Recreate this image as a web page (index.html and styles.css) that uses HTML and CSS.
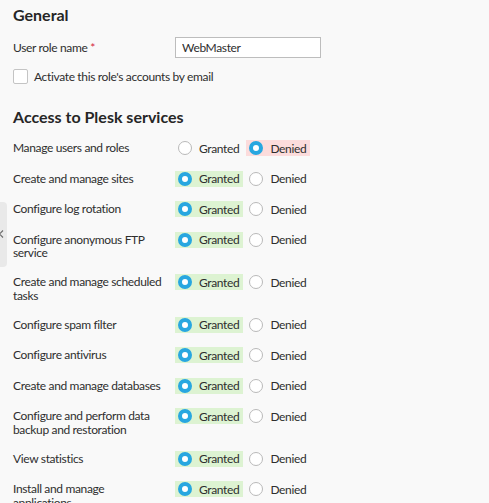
FILE: index.html
```html
<!DOCTYPE html>
<html lang="en">
<head>
    <meta charset="UTF-8">
    <meta name="viewport" content="width=device-width, initial-scale=1.0">
    <title>User role</title>
    <link rel="stylesheet" href="styles.css">
</head>
<body>
    <!-- collapsed sidebar handle -->
    <div class="side-handle">
        <svg class="side-arrow" width="6" height="8" viewBox="0 0 6 8"><path d="M5 0.5 L1.5 4 L5 7.5" fill="none" stroke="#6b6b6b" stroke-width="1.2"/></svg>
    </div>

    <div class="page">
        <!-- General -->
        <section class="form-section">
            <h2 class="section-title">General</h2>
            <div class="form-row">
                <label class="field-label" for="roleName">User role name <span class="required">*</span></label>
                <input class="text-input" id="roleName" type="text" value="WebMaster">
            </div>
            <label class="checkbox-row">
                <span class="checkbox"></span>
                <span>Activate this role's accounts by email</span>
            </label>
        </section>

        <!-- Access to Plesk services -->
        <section class="form-section access">
            <h2 class="section-title">Access to Plesk services</h2>
            <div class="perm-list">
                <div class="perm-row">
                    <div class="perm-label">Manage users and roles</div>
                    <div class="perm-choice">
                        <span class="option"><span class="radio"></span>Granted</span>
                        <span class="option denied"><span class="radio checked"></span>Denied</span>
                    </div>
                </div>
                <div class="perm-row">
                    <div class="perm-label">Create and manage sites</div>
                    <div class="perm-choice">
                        <span class="option granted"><span class="radio checked"></span>Granted</span>
                        <span class="option"><span class="radio"></span>Denied</span>
                    </div>
                </div>
                <div class="perm-row">
                    <div class="perm-label">Configure log rotation</div>
                    <div class="perm-choice">
                        <span class="option granted"><span class="radio checked"></span>Granted</span>
                        <span class="option"><span class="radio"></span>Denied</span>
                    </div>
                </div>
                <div class="perm-row">
                    <div class="perm-label">Configure anonymous FTP service</div>
                    <div class="perm-choice">
                        <span class="option granted"><span class="radio checked"></span>Granted</span>
                        <span class="option"><span class="radio"></span>Denied</span>
                    </div>
                </div>
                <div class="perm-row">
                    <div class="perm-label">Create and manage scheduled tasks</div>
                    <div class="perm-choice">
                        <span class="option granted"><span class="radio checked"></span>Granted</span>
                        <span class="option"><span class="radio"></span>Denied</span>
                    </div>
                </div>
                <div class="perm-row">
                    <div class="perm-label">Configure spam filter</div>
                    <div class="perm-choice">
                        <span class="option granted"><span class="radio checked"></span>Granted</span>
                        <span class="option"><span class="radio"></span>Denied</span>
                    </div>
                </div>
                <div class="perm-row">
                    <div class="perm-label">Configure antivirus</div>
                    <div class="perm-choice">
                        <span class="option granted"><span class="radio checked"></span>Granted</span>
                        <span class="option"><span class="radio"></span>Denied</span>
                    </div>
                </div>
                <div class="perm-row">
                    <div class="perm-label">Create and manage databases</div>
                    <div class="perm-choice">
                        <span class="option granted"><span class="radio checked"></span>Granted</span>
                        <span class="option"><span class="radio"></span>Denied</span>
                    </div>
                </div>
                <div class="perm-row">
                    <div class="perm-label">Configure and perform data backup and restoration</div>
                    <div class="perm-choice">
                        <span class="option granted"><span class="radio checked"></span>Granted</span>
                        <span class="option"><span class="radio"></span>Denied</span>
                    </div>
                </div>
                <div class="perm-row">
                    <div class="perm-label">View statistics</div>
                    <div class="perm-choice">
                        <span class="option granted"><span class="radio checked"></span>Granted</span>
                        <span class="option"><span class="radio"></span>Denied</span>
                    </div>
                </div>
                <div class="perm-row">
                    <div class="perm-label">Install and manage applications</div>
                    <div class="perm-choice">
                        <span class="option granted"><span class="radio checked"></span>Granted</span>
                        <span class="option"><span class="radio"></span>Denied</span>
                    </div>
                </div>
            </div>
        </section>
    </div>
</body>
</html>
```

FILE: styles.css
```css
body {
    margin: 0;
    background-color: #f9f9f9;
    font-family: Lato, "Open Sans", sans-serif;
    font-size: 12px;
    letter-spacing: -0.35px;
    color: #2e2e2e;
    overflow: hidden;
}
.page {
    padding: 5px 0 0 13px;
}

/* Sidebar handle peeking out on the left */
.side-handle {
    position: absolute;
    left: 0;
    top: 202px;
    width: 7px;
    height: 65px;
    background-color: #e9e9e9;
    border-radius: 0 4px 4px 0;
}
.side-arrow {
    position: absolute;
    left: -2px;
    top: 28px;
}

.section-title {
    margin: 0;
    font-size: 16px;
    line-height: 20px;
    font-weight: 700;
    letter-spacing: 0;
    color: #262626;
}
.access {
    margin-top: 23px;
}

/* General form */
.form-row {
    display: flex;
    align-items: center;
    margin-top: 12px;
}
.field-label {
    width: 162px;
}
.required {
    color: #d4263e;
}
.text-input {
    box-sizing: border-box;
    width: 146px;
    height: 21px;
    margin: 0;
    padding: 0 6px;
    border: 1px solid #bdbdbd;
    background: white;
    font-family: inherit;
    font-size: 12px;
    letter-spacing: -0.35px;
    color: #2e2e2e;
    outline: none;
}
.checkbox-row {
    display: flex;
    align-items: center;
    gap: 6px;
    margin-top: 11px;
}
.checkbox {
    box-sizing: border-box;
    width: 15px;
    height: 15px;
    border: 1px solid #c4c4c4;
    border-radius: 2px;
    background: white;
}

/* Permission list */
.perm-list {
    display: flex;
    flex-direction: column;
    gap: 14.5px;
    margin-top: 13px;
}
.perm-row {
    display: flex;
    align-items: flex-start;
}
.perm-label {
    width: 150px;
    margin-right: 12px;
    padding-top: 1px;
    line-height: 13.5px;
}
.perm-choice {
    display: flex;
    gap: 3px;
}
.option {
    display: inline-flex;
    align-items: center;
    gap: 7px;
    height: 16px;
    padding: 0 4px 0 3px;
}
.option.granted {
    background-color: #ddf3d2;
}
.option.denied {
    background-color: #fcdcdc;
}
.radio {
    box-sizing: border-box;
    width: 14px;
    height: 14px;
    border: 1px solid #b9b9b9;
    border-radius: 50%;
    background: white;
}
.radio.checked {
    border: 4.5px solid #28a7e0;
    background: white;
}
```
